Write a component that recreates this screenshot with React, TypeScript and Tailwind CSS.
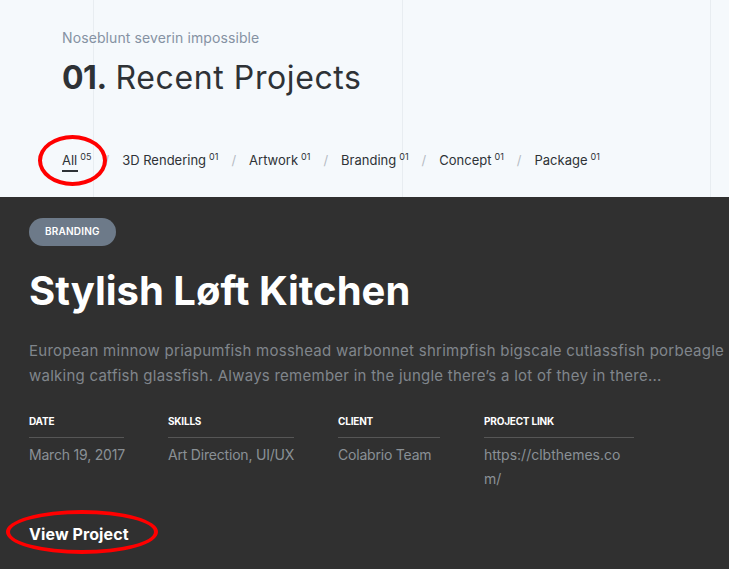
import React from 'react';

const font = { fontFamily: 'Inter, "Noto Sans", sans-serif' };

const filters = [
  { label: 'All', count: '05', active: true },
  { label: '3D Rendering', count: '01' },
  { label: 'Artwork', count: '01' },
  { label: 'Branding', count: '01' },
  { label: 'Concept', count: '01' },
  { label: 'Package', count: '01' },
];

const meta = [
  { label: 'Date', value: 'March 19, 2017', w: 'w-[95px]' },
  { label: 'Skills', value: 'Art Direction, UI/UX', w: 'w-[126px]' },
  { label: 'Client', value: 'Colabrio Team', w: 'w-[102px]' },
  { label: 'Project Link', value: 'https://clbthemes.com/', w: 'w-[150px]', link: true },
];

export default function App() {
  return (
    <div className="relative w-[729px] h-[569px] overflow-hidden" style={font}>
      {/* header */}
      <section className="relative h-[197px] bg-[#f5f9fc]">
        <div className="absolute top-0 bottom-0 left-[93px] w-px bg-[#e8edf1]" />
        <div className="absolute top-0 bottom-0 left-[402px] w-px bg-[#e8edf1]" />
        <div className="absolute top-0 bottom-0 left-[710px] w-px bg-[#e8edf1]" />

        <div className="relative pl-[62px] pt-[29px]">
          <p className="text-[14px] leading-[18px] text-[#8592a3] tracking-[0.1px]">Noseblunt severin impossible</p>
          <h2 className="mt-[11px] text-[32px] leading-[40px] text-[#2e3236]">
            <span className="font-bold tracking-[-0.5px]">01.</span> <span className="tracking-[0.6px]">Recent Projects</span>
          </h2>
        </div>

        <nav className="relative flex items-start pl-[62px] mt-[51px] text-[13px] text-[#2e3236]">
          {filters.map((f, i) => (
            <div key={f.label} className="flex items-start">
              {i > 0 && <span className="mx-[13px] mt-[2px] text-[#b5bcc4]">/</span>}
              <span className="relative pt-[2px]">
                {f.label}
                <sup className="ml-[3px] text-[9px] top-[-5px] relative align-baseline">{f.count}</sup>
                {f.active && <span className="absolute left-0 top-[21px] w-[16px] h-[1.5px] bg-[#2e3236]" />}
              </span>
            </div>
          ))}
        </nav>
      </section>

      {/* project */}
      <section className="bg-[#303030] h-[372px] pl-[29px] pt-[20px]">
        <span className="inline-flex items-center h-[28px] px-[16px] rounded-full bg-[#6d7a89] text-white text-[10px] font-semibold tracking-[0.2px]">
          BRANDING
        </span>
        <h1 className="mt-[19px] text-[40px] leading-[52px] font-bold text-white tracking-[0px]">Stylish Løft Kitchen</h1>
        <p className="mt-[21px] w-[760px] text-[15px] leading-[25px] text-[#80868c] whitespace-nowrap tracking-[0.25px]">
          European minnow priapumfish mosshead warbonnet shrimpfish bigscale cutlassfish porbeagle shark
          <br />
          walking catfish glassfish. Always remember in the jungle there’s a lot of they in there...
        </p>

        <div className="mt-[26px] flex gap-[44px]">
          {meta.map((m) => (
            <div key={m.label} className={m.w}>
              <div className="text-[10px] font-bold uppercase text-white pb-[8px] border-b border-[#565656] tracking-[-0.2px]">
                {m.label}
              </div>
              <div className={'mt-[5px] text-[14px] leading-[24px] text-[#8a9096] ' + (m.link ? 'break-all' : 'whitespace-nowrap tracking-[-0.2px]')}>
                {m.value}
              </div>
            </div>
          ))}
        </div>

        <a className="block mt-[31px] text-[16px] font-bold text-white tracking-[0.1px]">View Project</a>
      </section>

      {/* annotation ellipses */}
      <div className="absolute left-[38px] top-[135px] w-[69px] h-[51px] rounded-[50%] border-4 border-[#ff0000]" />
      <div className="absolute left-[6px] top-[510px] w-[152px] h-[44px] rounded-[50%] border-4 border-[#ff0000]" />
    </div>
  );
}
